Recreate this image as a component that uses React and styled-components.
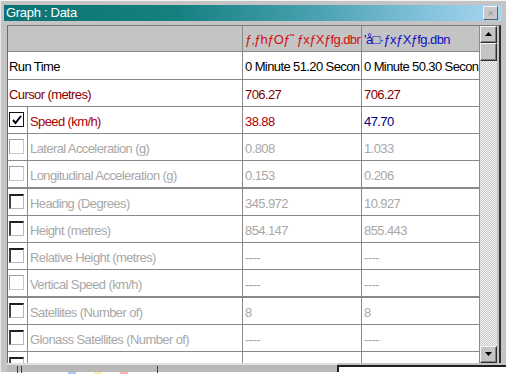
import React from "react";
import styled, { createGlobalStyle } from "styled-components";

const Global = createGlobalStyle`
  html, body { margin: 0; padding: 0; background: #ffffff; }
  body { font-family: "Liberation Sans", Arial, sans-serif; }
`;

const Page = styled.div`
  width: 512px;
  height: 384px;
  overflow: hidden;
  background: #ffffff;
  display: flex;
  flex-direction: column;
`;

const Window = styled.div`
  width: 506px;
  height: 372px;
  box-sizing: border-box;
  background: #c4c4c4;
  border-top: 1px solid #f4f4f4;
  border-left: 1px solid #e8e8e8;
  padding: 4px 5px 0 3px;
  display: flex;
  flex-direction: column;
`;

const TitleBar = styled.div`
  height: 17px;
  background: linear-gradient(90deg, #0a7474 0%, #168080 35%, #48a0b0 62%, #84c2de 85%, #a8d6f0 100%);
  display: flex;
  align-items: center;
  justify-content: space-between;
  padding: 0 4px 0 2px;
  margin-right: -1px;
`;

const Title = styled.span`
  color: #ffffff;
  font-size: 13px;
  letter-spacing: -0.3px;
`;

const CloseBtn = styled.div`
  width: 13px;
  height: 12px;
  background: #c8c8c8;
  border: 1px solid;
  border-color: #f4f4f4 #606060 #606060 #f4f4f4;
  color: #9a9a9a;
  font-size: 11px;
  line-height: 12px;
  text-align: center;
`;

const Body = styled.div`
  margin-top: 4px;
  margin-left: 3px;
  display: flex;
  height: 337px;
  border-top: 1px solid #7a7a7a;
  border-left: 1px solid #6a6a6a;
  border-right: 2px solid #303030;
`;

const Grid = styled.div`
  width: 472px;
  overflow: hidden;
  background: #ffffff;
`;

const Row = styled.div`
  display: grid;
  grid-template-columns: 20px 215px 119px 118px;
  height: ${(p) => p.$h}px;
  box-sizing: border-box;
  border-bottom: ${(p) => (p.$thick ? 2 : 1)}px solid #8a8a8a;
  background: ${(p) => (p.$head ? "#c4c4c4" : "#ffffff")};
`;

const Cell = styled.div`
  grid-column: span ${(p) => p.$span || 1};
  box-sizing: border-box;
  border-right: 1px solid #8a8a8a;
  display: flex;
  align-items: center;
  padding-left: ${(p) => (p.$pad != null ? p.$pad : 2)}px;
  padding-top: 3px;
  font-size: 13px;
  letter-spacing: -0.6px;
  color: ${(p) => p.$color || "#000000"};
  white-space: nowrap;
  overflow: hidden;
`;

const BoxCell = styled.div`
  box-sizing: border-box;
  border-right: 1px solid #8a8a8a;
  display: flex;
  align-items: center;
  padding-left: 1px;
`;

const Box = styled.div`
  width: 15px;
  height: 15px;
  box-sizing: border-box;
  background: #ffffff;
  border-style: solid;
  border-width: ${(p) => (p.$kind === "dark" ? "2px 1px 1px 2px" : "1px")};
  border-color: ${(p) =>
    p.$kind === "checked"
      ? "#101010"
      : p.$kind === "dark"
      ? "#202020 #b8b8b8 #b8b8b8 #404040"
      : "#9c9c9c #c8c8c8 #c8c8c8 #9c9c9c"};
  display: flex;
  align-items: center;
  justify-content: center;
`;

const VScroll = styled.div`
  width: 17px;
  display: flex;
  flex-direction: column;
  background-color: #ececec;
  background-image: repeating-conic-gradient(#c8c8c8 0 25%, #f4f4f4 0 50%);
  background-size: 2px 2px;
`;

const ScrollBtn = styled.div`
  width: 17px;
  height: 17px;
  box-sizing: border-box;
  background: #c4c4c4;
  border: 1px solid;
  border-color: #f4f4f4 #303030 #303030 #f4f4f4;
  box-shadow: inset -1px -1px 0 #808080;
  display: flex;
  align-items: center;
  justify-content: center;
`;

const Thumb = styled(ScrollBtn)`
  height: 18px;
`;

const Spacer = styled.div`
  flex: 1;
`;

const Bottom = styled.div`
  display: flex;
  height: 10px;
  margin-left: 3px;
  margin-right: -5px;
`;

const HScroll = styled.div`
  width: 330px;
  background: #b8b8b8;
  border-top: 2px solid #e0e0e0;
  box-sizing: border-box;
  position: relative;
`;

const Notch = styled.div`
  position: absolute;
  top: 1px;
  left: ${(p) => p.$x}px;
  width: 1px;
  height: 7px;
  background: #404040;
`;

const OtherPane = styled.div`
  flex: 1;
  margin-top: 2px;
  border-top: 2px solid #202020;
  border-left: 2px solid #202020;
  background: #ffffff;
`;

const Taskbar = styled.div`
  height: 12px;
  display: flex;
  align-items: flex-start;
  padding-left: 68px;
  gap: 18px;
`;

const Dot = styled.div`
  width: 8px;
  height: 2px;
  background: ${(p) => p.$c};
  opacity: 0.5;
`;

const Check = () => (
  <svg width="10" height="10" viewBox="0 0 10 10">
    <path d="M1 5 L3.5 8 L9 1" stroke="#000" strokeWidth="2" fill="none" />
  </svg>
);

const Arrow = ({ down }) => (
  <svg width="7" height="4" viewBox="0 0 7 4">
    <path d={down ? "M0 0 H7 L3.5 4 Z" : "M0 4 H7 L3.5 0 Z"} fill="#000" />
  </svg>
);

const GREY = "#a8a8a8";
const RED = "#a80000";
const DRED = "#800000";

const rows = [
  { label: "Speed (km/h)", a: "38.88", b: "47.70", c: RED, ca: RED, cb: "#000080", box: "checked" },
  { label: "Lateral Acceleration (g)", a: "0.808", b: "1.033", box: "light" },
  { label: "Longitudinal Acceleration (g)", a: "0.153", b: "0.206", box: "light", thick: true },
  { label: "Heading (Degrees)", a: "345.972", b: "10.927", box: "dark" },
  { label: "Height (metres)", a: "854.147", b: "855.443", box: "dark" },
  { label: "Relative Height (metres)", a: "----", b: "----", box: "dark" },
  { label: "Vertical Speed (km/h)", a: "----", b: "----", box: "light", thick: true },
  { label: "Satellites (Number of)", a: "8", b: "8", box: "dark" },
  { label: "Glonass Satellites (Number of)", a: "----", b: "----", box: "dark" },
  { label: "", a: "", b: "", box: "dark" },
];

export default function App() {
  return (
    <Page>
      <Global />
      <Window>
        <TitleBar>
          <Title>Graph : Data</Title>
          <CloseBtn>×</CloseBtn>
        </TitleBar>
        <Body>
          <Grid>
            <Row $h={26} $head>
              <Cell $span={2} />
              <Cell $color="#d01010">ƒ‚ƒhƒOƒ˜ ƒxƒXƒfg.dbr</Cell>
              <Cell $color="#1010c0">'å□·ƒxƒXƒfg.dbn</Cell>
            </Row>
            <Row $h={28}>
              <Cell $span={2} $pad={1}>Run Time</Cell>
              <Cell>0 Minute 51.20 Secon</Cell>
              <Cell>0 Minute 50.30 Secon</Cell>
            </Row>
            <Row $h={27}>
              <Cell $span={2} $pad={1} $color={DRED}>Cursor (metres)</Cell>
              <Cell $color={DRED}>706.27</Cell>
              <Cell $color={DRED}>706.27</Cell>
            </Row>
            {rows.map((r, i) => (
              <Row key={i} $h={r.thick ? 28 : 27} $thick={r.thick}>
                <BoxCell>
                  <Box $kind={r.box}>{r.box === "checked" && <Check />}</Box>
                </BoxCell>
                <Cell $color={r.c || GREY}>{r.label}</Cell>
                <Cell $color={r.ca || GREY}>{r.a}</Cell>
                <Cell $color={r.cb || GREY}>{r.b}</Cell>
              </Row>
            ))}
          </Grid>
          <VScroll>
            <ScrollBtn>
              <Arrow />
            </ScrollBtn>
            <Thumb />
            <Spacer />
            <ScrollBtn>
              <Arrow down />
            </ScrollBtn>
          </VScroll>
        </Body>
        <Bottom>
          <HScroll>
            <Notch $x={10} />
            <Notch $x={14} />
            <Notch $x={150} />
          </HScroll>
          <OtherPane />
        </Bottom>
      </Window>
      <Taskbar>
        <Dot $c="#6090ff" />
        <Dot $c="#ffe060" />
        <Dot $c="#ff6060" />
      </Taskbar>
    </Page>
  );
}
